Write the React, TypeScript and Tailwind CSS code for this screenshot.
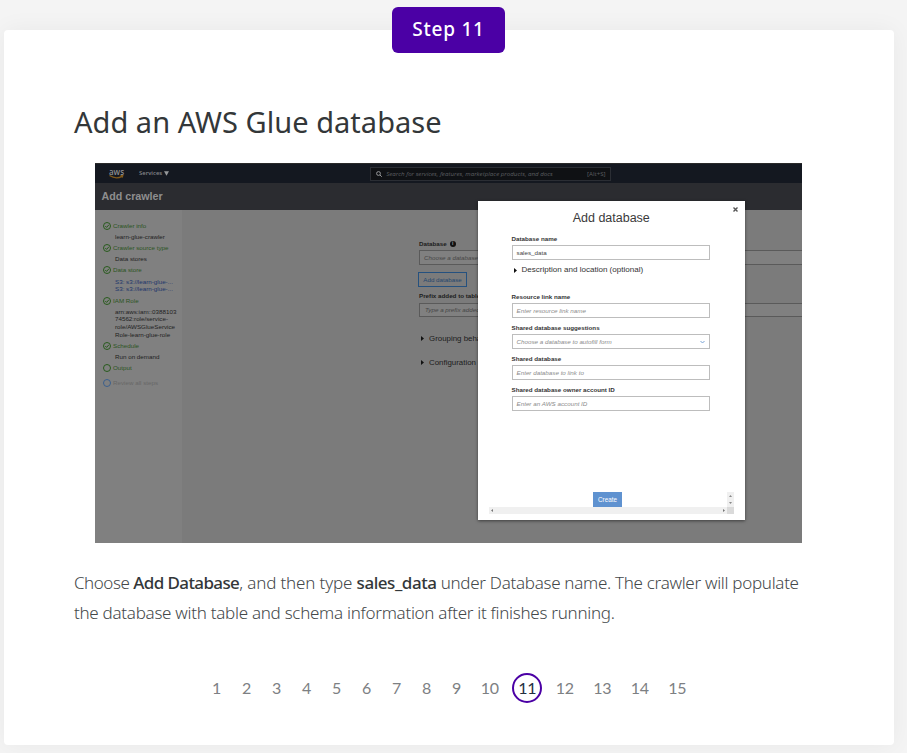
import type { ReactNode } from 'react';

function CheckMark() {
  return (
    <svg className="size-[8px] shrink-0" viewBox="0 0 16 16" fill="none" stroke="#285a1c" strokeWidth="2">
      <circle cx="8" cy="8" r="7" />
      <path d="M4.5 8l2.7 2.8 4.6-5.2" />
    </svg>
  );
}

function Ring({ color }: { color: string }) {
  return (
    <svg className="size-[8px] shrink-0" viewBox="0 0 16 16" fill="none" stroke={color} strokeWidth="2">
      <circle cx="8" cy="8" r="7" />
    </svg>
  );
}

function Stage({ title, icon, tone = 'text-[#2c5522]' }: { title: string; icon?: ReactNode; tone?: string }) {
  return (
    <div className="flex h-[11px] items-center gap-[2.5px] pl-[7.5px]">
      {icon ?? <CheckMark />}
      <span className={tone}>{title}</span>
    </div>
  );
}

function Detail({ children }: { children: ReactNode }) {
  return <div className="flex h-[11px] items-center pl-[20px] text-[#1f1f1f]">{children}</div>;
}

function Caret() {
  return (
    <svg className="h-[5px] w-[3px] shrink-0" viewBox="0 0 3 5" fill="#111">
      <path d="M0 0l3 2.5L0 5z" />
    </svg>
  );
}

function Field({ label, children, muted = true, select = false }: { label: string; children: ReactNode; muted?: boolean; select?: boolean }) {
  return (
    <div className="flex flex-col">
      <div className="h-[11px] text-[6.22px] leading-[9px] font-bold text-[#333]">{label}</div>
      <div className="flex h-[15px] items-center justify-between border border-[#bdbdbd] bg-white pr-[4px] pl-[4px] text-[6.25px]">
        <span className={muted ? 'text-[#8b8b8b] italic' : 'text-[#444]'}>{children}</span>
        {select && (
          <svg className="h-[4px] w-[5px]" viewBox="0 0 5 4" fill="none" stroke="#7ba3d4" strokeWidth="1">
            <path d="M.5 1l2 2 2-2" />
          </svg>
        )}
      </div>
    </div>
  );
}

function Sidebar() {
  return (
    <aside className="flex w-[86.5px] shrink-0 flex-col bg-[#808080] pt-[11px] text-[6.24px] leading-[8px] whitespace-nowrap">
      <Stage title="Crawler info" />
      <Detail>learn-glue-crawler</Detail>
      <Stage title="Crawler source type" />
      <Detail>Data stores</Detail>
      <Stage title="Data store" />
      <div className="mt-[2px] pl-[20px] leading-[7.8px] text-[#20366b]">
        <div>S3: s3://learn-glue-...</div>
        <div>S3: s3://learn-glue-...</div>
      </div>
      <div className="mt-[2px]">
        <Stage title="IAM Role" />
      </div>
      <div className="mt-[1.5px] pl-[20px] leading-[7.75px] text-[#1f1f1f]">
        <div>arn:aws:iam::0388103</div>
        <div>74562:role/service-</div>
        <div>role/AWSGlueService</div>
        <div>Role-learn-glue-role</div>
      </div>
      <div className="mt-[2px]">
        <Stage title="Schedule" />
      </div>
      <Detail>Run on demand</Detail>
      <Stage title="Output" icon={<Ring color="#285a1c" />} />
      <div className="mt-[3.5px]">
        <Stage title="Review all steps" icon={<Ring color="#3a5f8c" />} tone="text-[#676767]" />
      </div>
    </aside>
  );
}

function CrawlerForm() {
  return (
    <main className="flex flex-1 flex-col bg-[#7b7b7b] pt-[28.5px] pl-[237.5px] text-[6.24px] whitespace-nowrap text-[#1c1c1c]">
      <div className="flex h-[11px] items-center gap-[3px] font-bold">
        Database
        <span className="flex size-[6px] items-center justify-center rounded-full bg-[#111] text-[5px] leading-none font-bold text-[#999]">i</span>
      </div>
      <div className="mt-[1px] flex h-[15px] items-center border border-r-0 border-[#5a5a5a] bg-[#808080] pl-[4px] text-[#474747] italic">Choose a database</div>
      <div className="mt-[7px] ml-[-1px] flex h-[15px] w-[49px] items-center justify-center border border-[#25517f] text-[#24466e]">Add database</div>
      <div className="mt-[3px] flex h-[11px] items-center font-bold">Prefix added to tables</div>
      <div className="mt-[2px] flex h-[14px] items-center border border-r-0 border-[#5a5a5a] bg-[#808080] pl-[5px] text-[#474747] italic">Type a prefix added to tables</div>
      <div className="mt-[16.5px] flex h-[10px] items-center gap-[5px] pl-[2px] text-[7.9px]">
        <Caret />
        Grouping behavior
      </div>
      <div className="mt-[14px] flex h-[10px] items-center gap-[5px] pl-[2px] text-[7.9px]">
        <Caret />
        Configuration
      </div>
    </main>
  );
}

function DatabaseDialog() {
  return (
    <div className="absolute top-[37.5px] left-[382.5px] flex h-[319.5px] w-[267.5px] flex-col bg-white pt-[11.5px] shadow-[0_1px_3px_rgba(0,0,0,0.5)]">
      <svg className="absolute top-[6px] right-[7px] size-[5px]" viewBox="0 0 5 5" stroke="#555" strokeWidth="1.4">
        <path d="M.5 .5l4 4M4.5 .5l-4 4" />
      </svg>
      <h2 className="h-[22px] text-center text-[12.5px] leading-[12px] text-[#3a3a3a]">Add database</h2>
      <div className="flex flex-col pr-[35px] pl-[34px]">
        <Field label="Database name" muted={false}>sales_data</Field>
        <div className="mt-[5px] flex h-[10px] items-center gap-[5px] pl-[2px] text-[8.05px] text-[#333]">
          <Caret />
          Description and location (optional)
        </div>
        <div className="mt-[17px] flex flex-col gap-[5.15px]">
          <Field label="Resource link name">Enter resource link name</Field>
          <Field label="Shared database suggestions" select>Choose a database to autofill form</Field>
          <Field label="Shared database">Enter database to link to</Field>
          <Field label="Shared database owner account ID">Enter an AWS account ID</Field>
        </div>
      </div>
      <div className="mt-auto mr-[11px] mb-[6px] ml-[11.5px] grid grid-cols-[1fr_7px]">
        <div className="flex justify-center">
          <div className="mr-[1px] flex h-[15px] w-[29px] items-center justify-center bg-[#5f92d0] text-[6.3px] text-white">Create</div>
        </div>
        <div className="flex flex-col items-center justify-between bg-[#f0f0f0] py-[3px]">
          <svg className="h-[2px] w-[3px]" viewBox="0 0 3 2" fill="#888"><path d="M0 2L1.5 0 3 2z" /></svg>
          <svg className="h-[2px] w-[3px]" viewBox="0 0 3 2" fill="#888"><path d="M0 0h3L1.5 2z" /></svg>
        </div>
        <div className="flex h-[7px] items-center justify-between bg-[#f0f0f0] px-[2px]">
          <svg className="h-[3px] w-[2px]" viewBox="0 0 2 3" fill="#777"><path d="M2 0v3L0 1.5z" /></svg>
          <svg className="h-[3px] w-[2px]" viewBox="0 0 2 3" fill="#777"><path d="M0 0v3l2-1.5z" /></svg>
        </div>
        <div className="bg-[#dadada]" />
      </div>
    </div>
  );
}

function ConsoleFigure() {
  return (
    <div className="relative mt-[22px] ml-[21px] flex h-[380px] w-[707px] flex-col overflow-hidden bg-[#7b7b7b] font-['Liberation_Sans',sans-serif]">
      <div className="flex h-[20px] shrink-0 items-center border-t border-[#2a2a2a] bg-[#141820] font-['Open_Sans',sans-serif]">
        <div className="ml-[14px] flex w-[15px] flex-col items-center">
          <span className="text-[8px] leading-[6px] font-semibold text-[#8b8d90]">aws</span>
          <svg className="h-[4px] w-[15px]" viewBox="0 0 15 4" fill="none" stroke="#80591b" strokeWidth="1.2">
            <path d="M.5 .6q6.500 4 12.500 .8M11.500 .6h2.300l-.6 2" />
          </svg>
        </div>
        <span className="ml-[15px] text-[5.9px] font-semibold text-[#85878a]">Services</span>
        <svg className="ml-[2px] h-[5px] w-[5px]" viewBox="0 0 5 5" fill="#96989a"><path d="M0 .3h5L2.500 4.800z" /></svg>
        <div className="ml-[200.5px] flex h-[14px] w-[241px] items-center border border-[#2b2e34] bg-[#0f1114] pr-[4px] pl-[5px] text-[6.18px] text-[#5c5e61]">
          <svg className="mr-[4.5px] size-[6px]" viewBox="0 0 12 12" fill="none" stroke="#96989a" strokeWidth="2">
            <circle cx="5" cy="5" r="3.800" />
            <path d="M8 8l3.500 3.500" />
          </svg>
          <span className="italic">Search for services, features, marketplace products, and docs</span>
          <span className="ml-auto">[Alt+S]</span>
        </div>
      </div>
      <div className="flex h-[26.5px] shrink-0 items-center bg-[#2b2c30] pl-[6.5px] text-[10.7px] font-bold text-[#8e8e8e]">Add crawler</div>
      <div className="flex flex-1">
        <Sidebar />
        <CrawlerForm />
      </div>
      <DatabaseDialog />
    </div>
  );
}

const pages = Array.from({ length: 15 }, (_, i) => i + 1);

export default function App() {
  return (
    <div className="h-[753px] overflow-hidden bg-[#f4f4f4] pt-[30px] pl-[4px] font-['Noto_Sans',sans-serif]">
      <section className="relative flex h-[715px] w-[890px] flex-col rounded-[4px] bg-white px-[70px] pt-[72px] shadow-[0_0_24px_rgba(0,0,0,0.05)]">
        <div className="absolute top-[-23px] left-[388px] flex h-[46px] w-[113px] items-center justify-center rounded-[6px] bg-[#4b00a5] pb-[1px] text-[19px] font-medium tracking-[0.75px] text-white">Step 11</div>
        <h1 className="h-[39px] text-[29px] leading-[39px] tracking-[0.03px] whitespace-nowrap text-[#333739]">Add an AWS Glue database</h1>
        <ConsoleFigure />
        <div className="mt-[25px] text-[17px] leading-[30px] font-light whitespace-nowrap text-[#44484a]">
          <div>
            <span className="tracking-[-0.47px]">Choose </span>
            <span className="font-medium tracking-[-0.61px] text-[#333739]">Add Database</span>
            <span className="tracking-[-0.15px]">, and then type </span>
            <span className="font-medium tracking-[-0.45px] text-[#333739]">sales_data</span>
            <span className="tracking-[-0.295px]"> under Database name. The crawler will populate</span>
          </div>
          <div className="tracking-[-0.28px]">the database with table and schema information after it finishes running.</div>
        </div>
        <nav className="mt-[45px] ml-[127px] flex font-['Lato',sans-serif] text-[16px] tracking-[-0.3px] text-[#7d8083]">
          {pages.map((n) => (
            <div key={n} className={n > 9 ? 'flex h-[30px] w-[37.5px] items-center justify-center' : 'flex h-[30px] w-[30px] items-center justify-center pl-[1px]'}>
              {n === 11 ? (
                <span className="flex size-[30px] shrink-0 items-center justify-center rounded-full border-2 border-[#4b00a5] text-[#232f3e]">{n}</span>
              ) : (
                n
              )}
            </div>
          ))}
        </nav>
      </section>
    </div>
  );
}
